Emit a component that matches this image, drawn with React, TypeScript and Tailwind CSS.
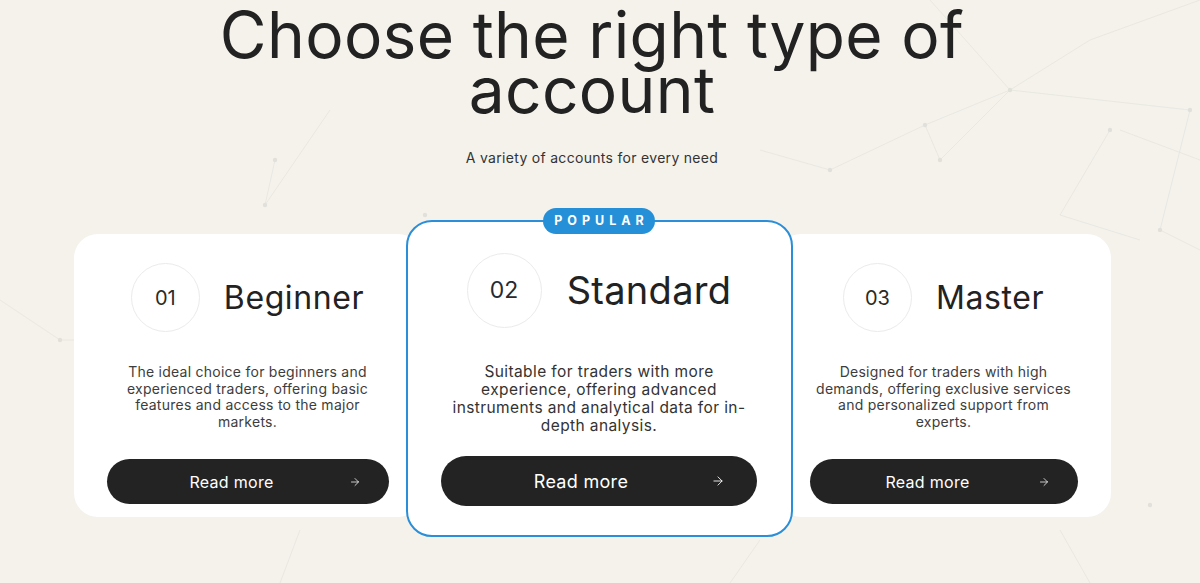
import { ArrowRight } from "lucide-react";

const font = { fontFamily: "Inter, 'Liberation Sans', sans-serif" };

function Backdrop() {
  // faint plexus lines behind the section
  const lines: [number, number, number, number][] = [
    [930, 0, 1010, 90], [1010, 90, 1090, 40], [1010, 90, 925, 125], [925, 125, 940, 160],
    [940, 160, 1010, 90], [1010, 90, 1190, 110], [1190, 110, 1160, 230], [1160, 230, 1200, 250],
    [1090, 40, 1200, 0], [925, 125, 830, 170], [830, 170, 760, 150],
    [1120, 130, 1200, 160], [1110, 130, 1060, 215], [1060, 215, 1140, 240],
    [275, 160, 265, 205], [265, 205, 330, 110],
    [0, 300, 60, 340], [60, 340, 75, 340],
    [1060, 530, 1090, 583], [760, 540, 730, 583], [300, 530, 280, 583],
  ];
  const dots: [number, number][] = [
    [1010, 90], [925, 125], [940, 160], [1190, 110], [1160, 230], [830, 170],
    [1110, 130], [275, 160], [265, 205], [60, 340], [425, 215], [1150, 505],
  ];
  return (
    <svg className="absolute inset-0 h-full w-full" viewBox="0 0 1200 583">
      {lines.map(([x1, y1, x2, y2], i) => (
        <line key={i} x1={x1} y1={y1} x2={x2} y2={y2} stroke="#e6e4de" strokeWidth="0.8" />
      ))}
      {dots.map(([cx, cy], i) => (
        <circle key={i} cx={cx} cy={cy} r="2.2" fill="#e2e0da" />
      ))}
    </svg>
  );
}

function ReadMore({ big }: { big?: boolean }) {
  return (
    <button
      className={
        big
          ? "flex h-[50px] w-[316px] items-center rounded-full bg-[#232323] pl-[34px] pr-[32px] text-white"
          : "flex h-[45px] w-full items-center rounded-full bg-[#232323] pl-[30px] pr-[28px] text-white"
      }
    >
      <span
        className={
          big
            ? "mr-[24px] flex-1 text-center text-[18px] tracking-[0.3px]"
            : "mr-[22px] flex-1 text-center text-[16px] tracking-[0.3px]"
        }
      >
        Read more
      </span>
      <ArrowRight className={big ? "h-[14px] w-[14px]" : "h-[12px] w-[12px]"} strokeWidth={1.5} />
    </button>
  );
}

function SideCard({ num, title, text, width }: { num: string; title: string; text: string; width: string }) {
  return (
    <div className={`${width} relative mt-[14px] flex h-[283px] flex-col items-center rounded-[24px] bg-white px-[33px] pb-[13px] pt-[29px]`}>
      <div className="flex items-center gap-[24px]">
        <div className="flex h-[69px] w-[69px] items-center justify-center rounded-full border-[1.5px] border-[#ebebeb] text-[20px] text-[#2a2a2a]">
          {num}
        </div>
        <div className="text-[32px] tracking-[0.6px] text-[#222]">{title}</div>
      </div>
      <p className="mt-[32px] w-[260px] text-center text-[14px] leading-[16.7px] tracking-[0.25px] text-[#3d3d3d]">
        {text}
      </p>
      <div className="mt-auto w-full">
        <ReadMore />
      </div>
    </div>
  );
}

export default function App() {
  return (
    <div className="relative h-[583px] w-full overflow-hidden bg-[#f5f2ec]" style={font}>
      <Backdrop />
      <div className="relative flex w-[1184px] flex-col items-center">
        <h1 className="mt-[7px] text-center text-[64px] leading-[55px] tracking-[0.35px] text-[#222]">
          Choose the right type of
          <br />
          account
        </h1>
        <p className="mt-[30px] text-[14px] tracking-[0.3px] text-[#333]">A variety of accounts for every need</p>

        <div className="mt-[52px] flex items-start justify-center">
          <SideCard
            width="w-[348px]"
            num="01"
            title="Beginner"
            text="The ideal choice for beginners and experienced traders, offering basic features and access to the major markets."
          />
          <div className="relative z-10 -mx-[16px] flex h-[317px] w-[387px] flex-col items-center rounded-[26px] border-2 border-[#2a8fd8] bg-white pb-[29px] pt-[31px]">
            <div className="absolute -top-[14px] left-1/2 flex h-[26px] w-[112px] -translate-x-1/2 items-center justify-center rounded-full bg-[#2590d8] pl-[5px] text-[12.5px] font-bold tracking-[0.4em] text-white">
              POPULAR
            </div>
            <div className="flex items-center gap-[25px]">
              <div className="flex h-[75px] w-[75px] items-center justify-center rounded-full border-[1.5px] border-[#ebebeb] text-[23px] text-[#2a2a2a]">
                02
              </div>
              <div className="text-[38px] tracking-[0.3px] text-[#222]">Standard</div>
            </div>
            <p className="mt-[35px] w-[310px] text-center text-[15.5px] leading-[18px] tracking-[0.4px] text-[#333]">
              Suitable for traders with more experience, offering advanced instruments and analytical data for in-depth analysis.
            </p>
            <div className="mt-auto">
              <ReadMore big />
            </div>
          </div>
          <SideCard
            width="w-[334px]"
            num="03"
            title="Master"
            text="Designed for traders with high demands, offering exclusive services and personalized support from experts."
          />
        </div>
      </div>
    </div>
  );
}
